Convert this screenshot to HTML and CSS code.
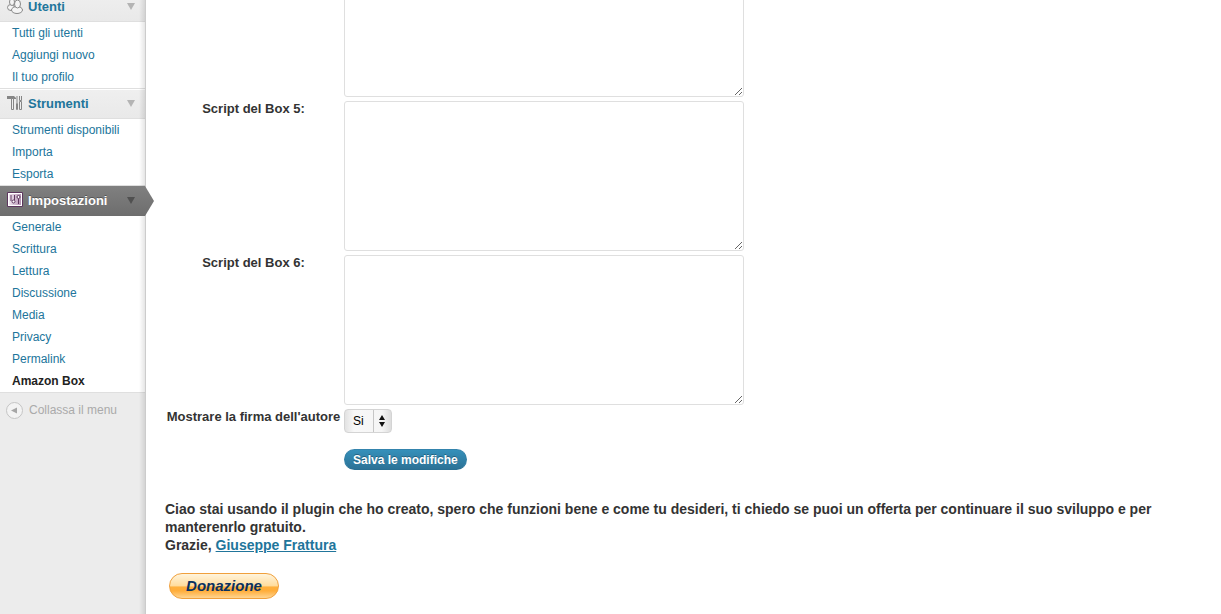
FILE: index.html
```html
<!DOCTYPE html>
<html lang="it">
<head>
<meta charset="utf-8">
<title>Amazon Box</title>
<link rel="stylesheet" href="styles.css">
</head>
<body>
<div class="admin">
  <nav class="sidebar" aria-label="Menu">
    <section class="group group-first">
      <a class="head" href="#utenti">
        <svg class="icon" viewBox="0 0 16 16" aria-hidden="true"><g fill="#f4f4f4" stroke="#888"><ellipse cx="4" cy="9.500" rx="3.500" ry="3"/><ellipse cx="5" cy="4" rx="2.500" ry="3.500"/><ellipse cx="10" cy="12" rx="5.500" ry="3.500"/><ellipse cx="10.500" cy="6" rx="3" ry="4"/></g></svg>
        <span>Utenti</span><span class="caret"></span>
      </a>
      <ul class="links">
        <li><a href="#tutti">Tutti gli utenti</a></li>
        <li><a href="#aggiungi">Aggiungi nuovo</a></li>
        <li><a href="#profilo">Il tuo profilo</a></li>
      </ul>
    </section>
    <section class="group">
      <a class="head" href="#strumenti">
        <svg class="icon" viewBox="0 0 16 16" aria-hidden="true"><path d="M0 1h7l2 2v1H0z" fill="#858585"/><path d="M4.500 3.500h2v11h-2z" fill="#eee" stroke="#858585"/><path d="M10 1v7" stroke="#858585"/><path d="M9.500 8.500h1v6h-1zM12.500 6.500h2v8h-2z" fill="#eee" stroke="#858585"/><path d="M12.500 1v4.500h2V1" fill="none" stroke="#858585"/></svg>
        <span>Strumenti</span><span class="caret"></span>
      </a>
      <ul class="links">
        <li><a href="#disponibili">Strumenti disponibili</a></li>
        <li><a href="#importa">Importa</a></li>
        <li><a href="#esporta">Esporta</a></li>
      </ul>
    </section>
    <section class="group">
      <a class="head head-current" href="#impostazioni">
        <svg class="icon" viewBox="0 0 16 16" aria-hidden="true"><defs><linearGradient id="tile"><stop stop-color="#f1e6f0"/><stop offset="1" stop-color="#b391b2"/></linearGradient></defs><path d="M.5 .5h15v14H.5z" fill="#fff" stroke="#5d375e"/><path d="M2 2h12v11H2z" fill="url(#tile)"/><path d="M4 3v6M7.500 3v5M11.500 7v5" stroke="#5d375e"/><circle cx="6.500" cy="9.500" r="1.500" fill="#fff" stroke="#5d375e"/><circle cx="11.500" cy="5" r="1.500" fill="#fff" stroke="#5d375e"/></svg>
        <span>Impostazioni</span><span class="caret"></span>
        <svg class="pointer" viewBox="0 0 9 30" aria-hidden="true"><defs><linearGradient id="g" x2="0" y2="1"><stop stop-color="#808080"/><stop offset="1" stop-color="#6d6d6d"/></linearGradient></defs><path d="M0 0l9 15-9 15z" fill="url(#g)"/></svg>
      </a>
      <ul class="links">
        <li><a href="#generale">Generale</a></li>
        <li><a href="#scrittura">Scrittura</a></li>
        <li><a href="#lettura">Lettura</a></li>
        <li><a href="#discussione">Discussione</a></li>
        <li><a href="#media">Media</a></li>
        <li><a href="#privacy">Privacy</a></li>
        <li><a href="#permalink">Permalink</a></li>
        <li><a class="current" href="#amazon" aria-current="page">Amazon Box</a></li>
      </ul>
    </section>
    <button class="collapse" type="button">
      <svg class="collapse-icon" viewBox="0 0 17 17" aria-hidden="true"><circle cx="8.500" cy="8.500" r="8" fill="#f3f3f3" stroke="#c4c4c4"/><path d="M11 5.500v6L5 8.500z" fill="#a6a6a6"/></svg>
      <span>Collassa il menu</span>
    </button>
  </nav>
  <main class="content">
    <form class="form">
      <textarea class="box" aria-label="Box 4"></textarea>
      <label class="label" for="box5">Script del Box 5:</label>
      <textarea class="box" id="box5"></textarea>
      <label class="label" for="box6">Script del Box 6:</label>
      <textarea class="box" id="box6"></textarea>
      <label class="label" for="firma">Mostrare la firma dell'autore</label>
      <div class="choice">
        <select id="firma"><option>Si</option><option>No</option></select>
        <svg class="stepper" viewBox="0 0 18 22" aria-hidden="true"><path d="M.5 0v22" stroke="#c6c6c6"/><path d="M9 5l3 5H6zM9 17l3-5H6z" fill="#111"/></svg>
      </div>
      <button class="save" type="button">Salva le modifiche</button>
    </form>
    <p class="note">Ciao stai usando il plugin che ho creato, spero che funzioni bene e come tu desideri, ti chiedo se puoi un offerta per continuare il suo sviluppo e per<br>manterenrlo gratuito.<br>Grazie, <a href="#autore">Giuseppe Frattura</a></p>
    <button class="donate" type="button">Donazione</button>
  </main>
</div>
</body>
</html>
```
FILE: styles.css
```css
* { box-sizing: border-box; }
body {
  margin: 0;
  overflow: hidden;
  background: #fff;
  color: #333;
  font-family: "Liberation Sans", Arial, sans-serif;
  font-size: 12px;
}
.admin { display: flex; height: 100vh; }
a { color: #21759b; }

/* Side menu */
.sidebar {
  position: relative;
  flex: 0 0 146px;
  background: #ececec;
  border-right: 1px solid #ccc;
}
.sidebar::after {
  content: "";
  position: absolute;
  top: 0;
  right: 0;
  bottom: 0;
  width: 6px;
  background: linear-gradient(to right, rgba(0, 0, 0, 0), rgba(0, 0, 0, 0.1));
  pointer-events: none;
}
.group-first { margin-top: -8px; }
.head {
  position: relative;
  display: flex;
  align-items: center;
  gap: 5px;
  height: 30px;
  padding: 0 10px 2px 7px;
  background: linear-gradient(#efefef, #e9e9e9);
  border-top: 1px solid #fff;
  border-bottom: 1px solid #dfdfdf;
  font-size: 13px;
  font-weight: bold;
  text-decoration: none;
}
.icon { flex: none; width: 16px; height: 16px; }
.caret {
  margin-left: auto;
  border: 4px solid transparent;
  border-top: 7px solid #b4b4b4;
  border-bottom: 0;
}
.head-current {
  z-index: 1;
  background: linear-gradient(#808080, #6d6d6d);
  border: 0;
  color: #fff;
  text-shadow: 0 -1px 0 #555;
}
.head-current .caret { border-top-color: #505050; }
.pointer { position: absolute; top: 0; left: 100%; width: 9px; height: 30px; }
.links {
  margin: 0;
  padding: 0;
  list-style: none;
  background: #fff;
  border-bottom: 1px solid #dfdfdf;
}
.links a {
  display: block;
  padding-left: 12px;
  line-height: 22px;
  text-decoration: none;
}
.links .current { color: #222; font-weight: bold; }
.collapse {
  display: flex;
  align-items: center;
  gap: 6px;
  height: 34px;
  padding: 0 6px;
  border: 0;
  background: none;
  color: #aaa;
  font: inherit;
}
.collapse-icon { width: 17px; height: 17px; }

/* Settings form */
.content { flex: 1; min-width: 0; padding: 0 15px 0 19px; }
.form {
  display: grid;
  grid-template-columns: 177px minmax(0, 400px);
  gap: 4px 2px;
  margin-top: -53px;
}
.box {
  grid-column: 2;
  display: block;
  width: 100%;
  height: 150px;
  border: 1px solid #dfdfdf;
  border-radius: 3px;
  background: #fff;
  resize: vertical;
}
.label {
  font-size: 13px;
  font-weight: bold;
  line-height: 16px;
  text-align: center;
  white-space: nowrap;
}
.choice { position: relative; justify-self: start; }
.choice select {
  appearance: none;
  display: block;
  width: 48px;
  height: 24px;
  padding: 0 8px;
  border: 1px solid #d4d4d4;
  border-radius: 4px;
  background: linear-gradient(to right, #e2e2e2, #f8f8f8 20%, #f5f5f5 80%, #ddd);
  color: #000;
  font: inherit;
}
.stepper {
  position: absolute;
  top: 1px;
  right: 1px;
  width: 18px;
  height: 22px;
  pointer-events: none;
}
.save {
  grid-column: 2;
  justify-self: start;
  height: 21px;
  margin-top: 12px;
  padding: 0 8px;
  border: 1px solid #298cba;
  border-color: #3484ad #2e7ca3 #296f92;
  border-radius: 11px;
  background: linear-gradient(#3590ba, #2c7296);
  color: #fff;
  font: bold 12px "Liberation Sans", Arial, sans-serif;
  text-shadow: 0 -1px 0 rgba(0, 0, 0, 0.3);
}
.note {
  margin: 30px 0 19px;
  font-size: 14px;
  font-weight: bold;
  line-height: 18px;
}
.donate {
  display: block;
  width: 110px;
  height: 26px;
  margin-left: 4px;
  padding: 0 0 2px;
  border: 1px solid #f0a03c;
  border-radius: 13px;
  background: linear-gradient(#fff4dc, #ffdd9f 48%, #ffb03c 55%, #ffad3a 70%, #ffd591);
  color: #0a3160;
  font: italic bold 15px "Liberation Sans", Arial, sans-serif;
}
```
